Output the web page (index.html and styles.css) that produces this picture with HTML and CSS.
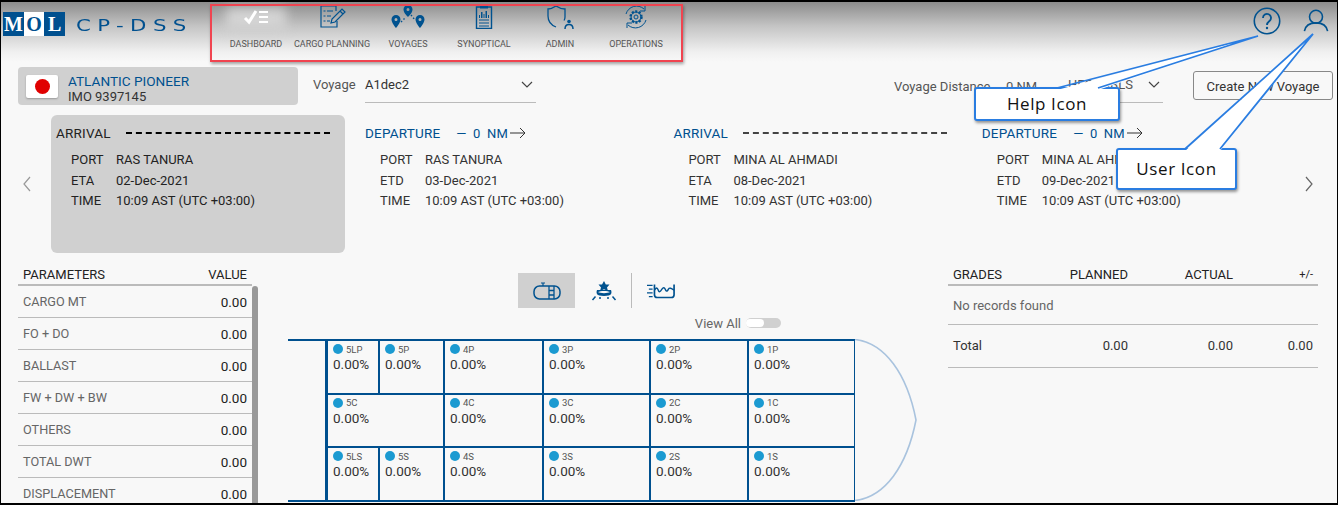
FILE: index.html
```html
<!DOCTYPE html>
<html lang="en">
<head>
<meta charset="utf-8">
<title>CP-DSS</title>
<link rel="stylesheet" href="styles.css">
</head>
<body>
<div class="page">
  <header class="header">
    <div class="logo"><span class="logo-l">M</span><span class="logo-o">O</span><span class="logo-l">L</span></div>
    <div class="brand">CP-DSS</div>
    <nav class="nav">
      <a class="nav-item active">
        <svg class="nav-icon" viewBox="0 0 30 24"><path d="M4 13l4 4 7-11" fill="none" stroke="#fff" stroke-width="3"/><path d="M18 7h9M18 12h9M18 17h9" stroke="#fff" stroke-width="2"/></svg>
        <span>DASHBOARD</span></a>
      <a class="nav-item">
        <svg class="nav-icon" viewBox="0 0 30 24"><path d="M19 6V1H4v21h16v-6" fill="none" stroke="#00528f" stroke-width="1.2"/><path d="M6.5 6h2M6.500 11h2M6.500 16h2M10 6h6M10 11h4M10 16h3" stroke="#00528f" stroke-width="1.200"/><path d="M14 18l1-4L25 4l3 3-10 10zM23 6l3 3" fill="none" stroke="#00528f" stroke-width="1.200"/></svg>
        <span>CARGO PLANNING</span></a>
      <a class="nav-item">
        <svg class="nav-icon wide-icon" viewBox="0 0 36 24"><g fill="#00528f"><path d="M18 0a4.500 4.500 0 0 1 4.500 4.500C22.500 8 18 12 18 12s-4.500-4-4.500-7.500A4.500 4.500 0 0 1 18 0zm0 3a1.500 1.500 0 1 0 0 3 1.500 1.500 0 0 0 0-3z"/><path d="M6 10a4.500 4.500 0 0 1 4.500 4.500C10.500 18 6 23 6 23s-4.500-5-4.500-8.500A4.500 4.500 0 0 1 6 10zm0 3a1.500 1.500 0 1 0 0 3 1.500 1.500 0 0 0 0-3z"/><path d="M30 10a4.500 4.500 0 0 1 4.500 4.500C34.500 18 30 23 30 23s-4.500-5-4.500-8.500A4.500 4.500 0 0 1 30 10zm0 3a1.500 1.500 0 1 0 0 3 1.500 1.500 0 0 0 0-3z"/></g><path d="M11 17l5-5M21 10l4 5" stroke="#00528f" stroke-width="1.400" stroke-dasharray="1.500 2"/></svg>
        <span>VOYAGES</span></a>
      <a class="nav-item">
        <svg class="nav-icon" viewBox="0 0 30 24"><path d="M7.500 2h15v21.500h-15z" fill="none" stroke="#00528f" stroke-width="1.400"/><path d="M11 0h8v3.500h-8z" fill="#00528f"/><path d="M10 13v-3h1v3zM12 13V7h1.500v6zM14.500 13V9h1v4zM16.500 13V6H18v7zM19 13v-3h1v3z" fill="#00528f"/><path d="M10 15h10M10 18h10M10 21h10" stroke="#00528f"/></svg>
        <span>SYNOPTICAL</span></a>
      <a class="nav-item">
        <svg class="nav-icon" viewBox="0 0 30 24"><path d="M11 1c3 2 6 3 9 3v8c0 1.500-.3 2.500-1 3.500M11 22c-5-2-8-6-8-11V4c3 0 5-1 8-3" fill="none" stroke="#00528f" stroke-width="1.300"/><circle cx="24" cy="16.500" r="1.800" fill="#00528f"/><path d="M20 24c0-3 2-4.500 4-4.500s4 1.500 4 4.500" fill="none" stroke="#00528f" stroke-width="1.500"/></svg>
        <span>ADMIN</span></a>
      <a class="nav-item">
        <svg class="nav-icon" viewBox="0 0 30 24"><path d="M5 9a11 11 0 0 1 18-5M25 15a11 11 0 0 1-18 5" fill="none" stroke="#00528f" stroke-width="1"/><path d="M24 1v5h-5M6 23v-5h5" fill="none" stroke="#00528f" stroke-width="1"/><circle cx="15" cy="12" r="5.500" fill="none" stroke="#00528f" stroke-width="2.400" stroke-dasharray="2 1.500"/><circle cx="15" cy="12" r="5" fill="none" stroke="#00528f"/><circle cx="15" cy="12" r="2" fill="none" stroke="#00528f"/></svg>
        <span>OPERATIONS</span></a>
    </nav>
    <div class="header-icons">
      <svg class="help" viewBox="0 0 28 28"><circle cx="14" cy="14" r="12.700" fill="none" stroke="#00528f" stroke-width="1.600"/><path d="M10 11a4 4 0 1 1 6.500 3c-1.500 1.200-2.500 1.800-2.500 4" fill="none" stroke="#00528f" stroke-width="1.800"/><circle cx="14" cy="21" r="1.200" fill="#00528f"/></svg>
      <svg class="user" viewBox="0 0 28 26"><circle cx="14" cy="8.500" r="7" fill="none" stroke="#00528f" stroke-width="1.700"/><path d="M1.500 24c1-6 6-9 12.500-9s11.500 3 12.500 9" fill="none" stroke="#00528f" stroke-width="1.700"/></svg>
    </div>
  </header>

  <section class="vessel-row">
    <div class="vessel">
      <div class="flag"><i></i></div>
      <div class="vessel-text"><div class="vessel-name">ATLANTIC PIONEER</div><div class="vessel-imo">IMO 9397145</div></div>
    </div>
    <div class="voyage-label">Voyage</div>
    <div class="select voyage-select"><span>A1dec2</span><svg class="chev" viewBox="0 0 12 7"><path d="M1 1l5 5 5-5" fill="none" stroke="#444" stroke-width="1.200"/></svg></div>
    <div class="distance">Voyage Distance</div>
    <div class="distance-val">0 NM</div>
    <div class="select unit-select"><span>HFO/MBLS</span><svg class="chev" viewBox="0 0 12 7"><path d="M1 1l5 5 5-5" fill="none" stroke="#444" stroke-width="1.200"/></svg></div>
    <button class="create">Create New Voyage</button>
  </section>

  <section class="carousel">
    <svg class="arrow" viewBox="0 0 10 16"><path d="M8 1L2 8l6 7" fill="none" stroke="#999" stroke-width="1.200"/></svg>
    <div class="stops">
      <div class="stop first">
        <div class="stop-head"><span class="dark">ARRIVAL</span><span class="dash black"></span></div>
        <dl><dt>PORT</dt><dd>RAS TANURA</dd><dt>ETA</dt><dd>02-Dec-2021</dd><dt>TIME</dt><dd>10:09 AST (UTC +03:00)</dd></dl>
      </div>
      <div class="stop">
        <div class="stop-head"><span class="blue">DEPARTURE</span><span class="nm">— 0 NM</span><svg class="long" viewBox="0 0 16 12"><path d="M0 6h15M10 1l5 5-5 5" fill="none" stroke="#333"/></svg></div>
        <dl><dt>PORT</dt><dd>RAS TANURA</dd><dt>ETD</dt><dd>03-Dec-2021</dd><dt>TIME</dt><dd>10:09 AST (UTC +03:00)</dd></dl>
      </div>
      <div class="stop">
        <div class="stop-head"><span class="blue">ARRIVAL</span><span class="dash"></span></div>
        <dl><dt>PORT</dt><dd>MINA AL AHMADI</dd><dt>ETA</dt><dd>08-Dec-2021</dd><dt>TIME</dt><dd>10:09 AST (UTC +03:00)</dd></dl>
      </div>
      <div class="stop">
        <div class="stop-head"><span class="blue">DEPARTURE</span><span class="nm">— 0 NM</span><svg class="long" viewBox="0 0 16 12"><path d="M0 6h15M10 1l5 5-5 5" fill="none" stroke="#333"/></svg></div>
        <dl><dt>PORT</dt><dd>MINA AL AHMADI</dd><dt>ETD</dt><dd>09-Dec-2021</dd><dt>TIME</dt><dd>10:09 AST (UTC +03:00)</dd></dl>
      </div>
    </div>
    <svg class="arrow right" viewBox="0 0 10 16"><path d="M2 1l6 7-6 7" fill="none" stroke="#666" stroke-width="1.200"/></svg>
  </section>

  <section class="lower">
    <div class="params">
      <div class="params-head"><span>PARAMETERS</span><span>VALUE</span></div>
      <div class="param"><span>CARGO MT</span><b>0.00</b></div>
      <div class="param"><span>FO + DO</span><b>0.00</b></div>
      <div class="param"><span>BALLAST</span><b>0.00</b></div>
      <div class="param"><span>FW + DW + BW</span><b>0.00</b></div>
      <div class="param"><span>OTHERS</span><b>0.00</b></div>
      <div class="param"><span>TOTAL DWT</span><b>0.00</b></div>
      <div class="param"><span>DISPLACEMENT</span><b>0.00</b></div>
    </div>
    <div class="scrollbar"></div>
    <div class="center">
      <div class="tabs">
        <div class="tab on"><svg viewBox="0 0 28 18"><path d="M8 1h4M10 1v3" stroke="#00528f" stroke-width="1.200"/><rect x="1" y="4" width="26" height="13" rx="5.500" fill="none" stroke="#00528f" stroke-width="1.500"/><path d="M16 4v13M21 4v13M16 8.500h5M16 13h5" stroke="#00528f" stroke-width="1.300"/></svg></div>
        <div class="tab"><svg viewBox="0 0 26 20"><path d="M13 0l1.800 3.500h3.700L16 6.500l1 3.500-4-1.700L9 10l1-3.500-2.500-3H11z" fill="#00528f"/><path d="M6 9c-1 3-1 6 7 6s8-3 7-6" fill="#00528f"/><path d="M7 11c2-1.500 10-1.500 12 0-2 1.500-10 1.500-12 0z" fill="#f8f8f8"/><path d="M1.500 19l3-3.500M24.500 19l-3-3.500M8 17h2M16 17h2" stroke="#00528f" stroke-width="1.500"/></svg></div>
        <div class="tab-sep"></div>
        <div class="tab"><svg viewBox="0 0 30 16"><path d="M8 1v11a3 3 0 0 0 3 3h15a3 3 0 0 0 3-3V1" fill="none" stroke="#00528f" stroke-width="1.800"/><path d="M8 7c2-3 3-3 4 0s2 2 4-1 3-1 4 1 2 1 3-1 3-1 6 1" fill="none" stroke="#00528f" stroke-width="1.500"/><path d="M0 2h6M2 6h4M0 10h6M2 14h4" stroke="#00528f" stroke-width="1.200"/></svg></div>
      </div>
      <div class="view-all"><span>View All</span><i class="toggle"><em></em></i></div>
      <div class="ship">
        <div class="stub"></div>
        <div class="tanks">
          <div class="tank"><p><i></i>5LP</p><strong>0.00%</strong></div>
          <div class="tank"><p><i></i>5P</p><strong>0.00%</strong></div>
          <div class="tank"><p><i></i>4P</p><strong>0.00%</strong></div>
          <div class="tank"><p><i></i>3P</p><strong>0.00%</strong></div>
          <div class="tank"><p><i></i>2P</p><strong>0.00%</strong></div>
          <div class="tank"><p><i></i>1P</p><strong>0.00%</strong></div>
          <div class="tank wide"><p><i></i>5C</p><strong>0.00%</strong></div>
          <div class="tank"><p><i></i>4C</p><strong>0.00%</strong></div>
          <div class="tank"><p><i></i>3C</p><strong>0.00%</strong></div>
          <div class="tank"><p><i></i>2C</p><strong>0.00%</strong></div>
          <div class="tank"><p><i></i>1C</p><strong>0.00%</strong></div>
          <div class="tank"><p><i></i>5LS</p><strong>0.00%</strong></div>
          <div class="tank"><p><i></i>5S</p><strong>0.00%</strong></div>
          <div class="tank"><p><i></i>4S</p><strong>0.00%</strong></div>
          <div class="tank"><p><i></i>3S</p><strong>0.00%</strong></div>
          <div class="tank"><p><i></i>2S</p><strong>0.00%</strong></div>
          <div class="tank"><p><i></i>1S</p><strong>0.00%</strong></div>
        </div>
        <svg class="bow" viewBox="0 0 62 162"><path d="M0 .5C30 4 52 35 61 81 52 127 30 158 0 161.500" fill="none" stroke="#a9c3de" stroke-width="1.600"/></svg>
      </div>
    </div>
    <div class="grades">
      <div class="grades-row grades-head"><span>GRADES</span><span>PLANNED</span><span>ACTUAL</span><span>+/-</span></div>
      <div class="no-records">No records found</div>
      <div class="grades-row grades-total"><span>Total</span><span>0.00</span><span>0.00</span><span>0.00</span></div>
    </div>
  </section>

  <div class="annot-box"></div>
  <div class="callout help-call">Help Icon</div>
  <div class="callout user-call">User Icon</div>
  <svg class="tails" viewBox="0 0 1338 505">
    <path d="M1057 90L1258 36 1098 90z" fill="#fff"/>
    <path d="M1057 88L1258 36 1098 88" fill="none" stroke="#2a7de1" stroke-width="1.800"/>
    <path d="M1185 151L1313 34 1220 151z" fill="#fff"/>
    <path d="M1185 149L1313 34 1220 149" fill="none" stroke="#2a7de1" stroke-width="1.800"/>
  </svg>
</div>
</body>
</html>
```
FILE: styles.css
```css
* { box-sizing: border-box; }
html, body { margin: 0; padding: 0; }
body { width: 1338px; height: 505px; overflow: hidden; }
.page {
  position: relative; width: 1338px; height: 505px; overflow: hidden;
  background: #f8f8f8; color: #333;
  border: 1px solid #000; border-top-width: 2px; border-bottom-width: 2px;
  font-family: Roboto, "Liberation Sans", sans-serif; font-size: 13px;
}
.header {
  display: flex; align-items: flex-start; height: 60px;
  background: linear-gradient(#8c8c8c 0, #c4c4c4 24px, #f0f0f0 50px, #f8f8f8 60px);
}
.logo { display: flex; margin: 10px 0 0 2px; width: 62px; height: 24px; background: #00508f; font: bold 20px "Liberation Serif", serif; line-height: 24px; }
.logo span { flex: 1; text-align: center; }
.logo-l { color: #fff; }
.logo-o { background: #fff; color: #00508f; }
.brand { flex: none; width: 126px; margin: 15px 0 0 11px; color: #00508f; font: 15px/18px "DejaVu Sans", sans-serif; letter-spacing: 4.500px; transform: scaleX(1.420); transform-origin: left; }
.nav { display: flex; margin-left: 16px; }
.nav-item { display: flex; flex-direction: column; align-items: center; width: 76px; color: #555; font-size: 9px; }
.nav-item span { margin-top: 7px; line-height: 16px; white-space: nowrap; }
.nav-icon { width: 30px; height: 24px; margin-top: 3px; }
.wide-icon { width: 36px; }
.nav-item.active { position: relative; }
.nav-item.active::before { content: ""; position: absolute; z-index: 0; left: 8px; top: 6px; width: 60px; height: 22px; background: #d4d4d4; filter: blur(6px); }
.nav-item.active > * { position: relative; }
.header-icons { display: flex; align-items: center; gap: 22px; margin: 5px 0 0 auto; padding-right: 8px; }
.help { width: 28px; height: 28px; }
.user { width: 26px; height: 26px; }

.vessel-row { display: flex; align-items: flex-start; height: 38px; margin-top: 5px; padding-left: 17px; }
.vessel { display: flex; align-items: center; width: 280px; height: 38px; padding-left: 8px; background: #d0d0d0; border-radius: 4px; }
.flag { display: flex; align-items: center; justify-content: center; width: 32px; height: 23px; background: #fff; border-radius: 2px; box-shadow: 0 1px 2px #999; }
.flag i { width: 15px; height: 15px; border-radius: 50%; background: #e00000; }
.vessel-text { margin-left: 10px; padding-top: 6px; line-height: 16px; }
.vessel-name { color: #00508f; font-size: 13.600px; }
.voyage-label { margin: 10px 0 0 15px; width: 52px; color: #555; }
.select { display: flex; justify-content: space-between; align-items: flex-start; height: 36px; padding-top: 10px; border-bottom: 1px solid #bbb; color: #333; }
.voyage-select { width: 171px; }
.chev { width: 12px; height: 7px; margin-top: 4px; }
.voyage-select .chev { margin-right: 3px; }
.distance { margin: 12px 0 0 358px; width: 112px; color: #555; }
.distance-val { margin-top: 12px; width: 62px; color: #555; }
.unit-select { width: 95px; color: #555; }
.unit-select .chev { margin-right: 3px; }
.create { width: 140px; height: 29px; margin: 4px 0 0 30px; padding: 2px 0 0; background: transparent; border: 1px solid #888; border-radius: 3px; color: #333; font: inherit; }

.carousel { display: flex; align-items: flex-start; height: 138px; margin-top: 10px; }
.arrow { flex: none; width: 10px; height: 16px; margin: 61px 0 0 21px; }
.arrow.right { margin-left: 14px; }
.stops { display: flex; margin-left: 19px; }
.stop { width: 308.400px; height: 138px; padding: 11px 0 0 0; }
.stop.first { width: 294px; margin-right: 20px; padding-left: 5px; background: #d0d0d0; border-radius: 6px; color: #222; }
.stop-head { display: flex; align-items: center; height: 14px; font-size: 13.500px; letter-spacing: .2px; }
.blue { color: #00508f; }
.dark { color: #222; }
.dash { width: 204px; margin-left: 15px; border-top: 2px dashed #444; }
.dash.black { border-top-color: #000; }
.nm { margin-left: 16px; color: #00508f; white-space: nowrap; font-size: 13px; word-spacing: 3px; }
.long { width: 16px; height: 12px; margin-left: 2px; }
dl { display: grid; grid-template-columns: 45px 1fr; grid-auto-rows: 20.500px; margin: 10px 0 0 15px; line-height: 20.500px; white-space: nowrap; }
dd { margin: 0; }

.lower { display: flex; align-items: flex-start; height: 240px; margin-top: 14px; }
.params { width: 234px; margin-left: 17px; flex: none; }
.params-head { display: flex; justify-content: space-between; height: 19px; padding: 0 5px; border-bottom: 2px solid #bbb; color: #222; line-height: 16px; }
.param { display: flex; justify-content: space-between; align-items: center; height: 32px; padding: 0 5px; border-bottom: 1px solid #bbb; color: #666; font-size: 12.700px; }
.param b { font-weight: 400; font-size: 13.500px; color: #222; padding-top: 1px; }
.scrollbar { flex: none; width: 6px; height: 221px; margin-top: 19px; background: #999; border-radius: 3px 3px 0 0; }
.center { flex: none; width: 660px; margin-left: 30px; }
.tabs { display: flex; align-items: center; height: 35px; margin-top: 6px; margin-left: 230px; }
.tab { display: flex; align-items: center; justify-content: center; width: 57px; height: 35px; }
.tab svg { width: 28px; height: 20px; }
.tab.on { background: #d0d0d0; }
.tab-sep { width: 1px; height: 35px; margin-left: -1px; background: #bbb; }
.view-all { display: flex; align-items: center; justify-content: flex-end; gap: 5px; height: 20px; margin: 5px 167px 0 0; color: #666; }
.toggle { position: relative; display: block; width: 35px; height: 10px; background: #d0d0d0; border-radius: 5px; }
.toggle em { position: absolute; left: 0; top: 1px; width: 18px; height: 8px; background: #fff; border-radius: 4px; }
.ship { display: flex; height: 163px; margin: 6px 0 0 0; }
.stub { width: 37px; height: 163px; border: solid #00508f; border-width: 2px 0; }
.tanks { display: grid; grid-template-columns: 50px 63px 97px 105px 96px 105px; grid-template-rows: repeat(3, 1fr); gap: 2px; width: 530px; height: 163px; padding: 0 2px 0 0; border: 2px solid #00508f; border-left-width: 3px; background: #00508f; }
.tank { padding: 2px 0 0 5px; background: #f8f8f8; overflow: hidden; }
.tank.wide { grid-column: span 2; }
.tank p { display: flex; align-items: center; margin: 0; height: 12px; font-size: 9.500px; color: #555; }
.tank p i { width: 10px; height: 10px; margin-right: 3px; border-radius: 50%; background: #1b9ad1; }
.tank strong { display: block; font-weight: 400; font-size: 13.500px; line-height: 18px; color: #333; }
.bow { flex: none; width: 62px; height: 162px; margin-left: 0; }

.grades { width: 370px; flex: none; }
.grades-row { display: grid; grid-template-columns: 70px 105px 105px 80px; padding: 0 5px; }
.grades-row span { text-align: right; }
.grades-row span:first-child { text-align: left; }
.grades-head { height: 19px; border-bottom: 2px solid #bbb; color: #222; line-height: 16px; }
.grades-head span:last-child { font-size: 11px; }
.no-records { height: 39px; padding-left: 5px; line-height: 40px; color: #666; border-bottom: 1px solid #bbb; }
.grades-total { height: 43px; padding-bottom: 2px; align-items: center; border-bottom: 1px solid #bbb; color: #333; }

.annot-box { position: absolute; left: 209px; top: 2px; width: 473px; height: 58px; border: 2px solid #f04450; box-shadow: 1px 2px 3px rgba(0,0,0,.35); }
.tails { position: absolute; left: -1px; top: -2px; width: 1338px; height: 505px; }
.callout { position: absolute; display: flex; align-items: center; justify-content: center; padding-bottom: 2px; background: #fff; border: 2px solid #2a7de1; border-radius: 3px; box-shadow: 1px 2px 3px rgba(0,0,0,.4); color: #111; font-family: "Open Sans", sans-serif; font-size: 17px; letter-spacing: .6px; }
.help-call { left: 973px; top: 85px; width: 146px; height: 34px; }
.user-call { left: 1115px; top: 146px; width: 121px; height: 42px; }
```
